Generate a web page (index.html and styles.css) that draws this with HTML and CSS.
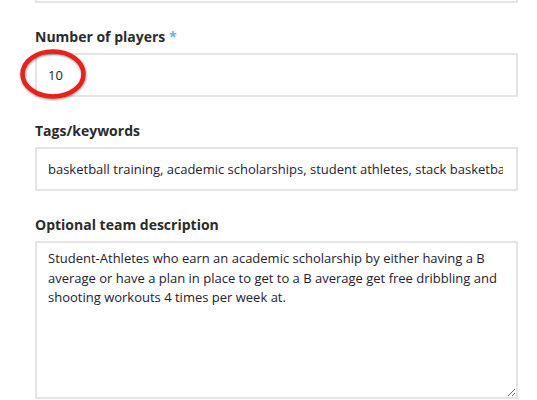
FILE: index.html
```html
<!DOCTYPE html>
<html>
<head>
<meta charset="utf-8">
<link rel="stylesheet" href="styles.css">
</head>
<body>
<div class="form">
  <div class="field-box top-box"></div>

  <div class="field">
    <label class="label">Number of players <span class="req">*</span></label>
    <div class="input-wrap">
      <input class="input" type="text" value="10" readonly>
      <svg class="circle" width="76" height="62" viewBox="0 0 76 62">
        <defs>
          <filter id="sh" x="-20%" y="-20%" width="140%" height="140%">
            <feDropShadow dx="0.5" dy="1" stdDeviation="1" flood-color="#000" flood-opacity="0.45"/>
          </filter>
        </defs>
        <ellipse cx="37" cy="29" rx="30.5" ry="22.5" fill="none" stroke="#e5231b" stroke-width="4.5" filter="url(#sh)"/>
      </svg>
    </div>
  </div>

  <div class="field">
    <label class="label">Tags/keywords</label>
    <input class="input" type="text" value="basketball training, academic scholarships, student athletes, stack basketball" readonly>
  </div>

  <div class="field">
    <label class="label">Optional team description</label>
    <textarea class="textarea" readonly>Student-Athletes who earn an academic scholarship by either having a B average or have a plan in place to get to a B average get free dribbling and shooting workouts 4 times per week at.</textarea>
  </div>
</div>
</body>
</html>
```

FILE: styles.css
```css
html, body {
  margin: 0;
  padding: 0;
  background: #ffffff;
  overflow: hidden;
}
.form {
  width: 483px;
  padding-left: 35px;
  font-family: "Open Sans", "Noto Sans", sans-serif;
}
.field-box.top-box {
  box-sizing: border-box;
  height: 44px;
  margin-top: -41px;
  border: 2px solid #e4e4e4;
  background: #fff;
}
.field {
  display: flex;
  flex-direction: column;
  margin-top: 24px;
}
.label {
  display: block;
  font-size: 14px;
  font-weight: 700;
  line-height: 20px;
  color: #2b2b2b;
  margin-bottom: 6px;
}
.req {
  color: #5cb8e6;
}
.input-wrap {
  position: relative;
}
.input {
  box-sizing: border-box;
  width: 483px;
  height: 44px;
  border: 2px solid #e4e4e4;
  border-radius: 0;
  padding: 0 13px 0 11px;
  margin: 0;
  font-family: "Open Sans", "Noto Sans", sans-serif;
  font-size: 13px;
  color: #1e2130;
  background: #fff;
  outline: none;
}
.textarea {
  box-sizing: border-box;
  width: 483px;
  height: 158px;
  border: 2px solid #e4e4e4;
  border-radius: 0;
  padding: 6px 4px 6px 11px;
  margin: 0;
  font-family: "Open Sans", "Noto Sans", sans-serif;
  font-size: 13px;
  line-height: 19.5px;
  color: #1e2130;
  background: #fff;
  outline: none;
  resize: both;
}
.circle {
  position: absolute;
  left: -19px;
  top: -8px;
  pointer-events: none;
}
```
